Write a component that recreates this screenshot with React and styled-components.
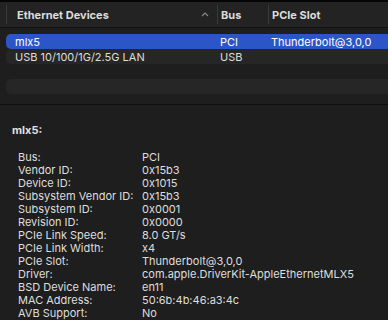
import React from 'react'
import styled, { createGlobalStyle } from 'styled-components'

const devices = [
  { name: 'mlx5', bus: 'PCI', slot: 'Thunderbolt@3,0,0' },
  { name: 'USB 10/100/1G/2.5G LAN', bus: 'USB', slot: '' },
  { name: '', bus: '', slot: '' },
  { name: '', bus: '', slot: '' },
]

const details = [
  ['Bus:', 'PCI'],
  ['Vendor ID:', '0x15b3'],
  ['Device ID:', '0x1015'],
  ['Subsystem Vendor ID:', '0x15b3'],
  ['Subsystem ID:', '0x0001'],
  ['Revision ID:', '0x0000'],
  ['PCIe Link Speed:', '8.0 GT/s'],
  ['PCIe Link Width:', 'x4'],
  ['PCIe Slot:', 'Thunderbolt@3,0,0'],
  ['Driver:', 'com.apple.DriverKit-AppleEthernetMLX5'],
  ['BSD Device Name:', 'en11'],
  ['MAC Address:', '50:6b:4b:46:a3:4c'],
  ['AVB Support:', 'No'],
]

export default function App() {
  return (
    <>
      <GlobalStyle />
      <Window>
        <TopRule />
        <Header>
          <HeadCell>
            Ethernet Devices
            <Chevron viewBox="0 0 8 5">
              <path d="M1 4 L4 1 L7 4" fill="none" stroke="#8a8a8a" strokeWidth="1.1" />
            </Chevron>
          </HeadCell>
          <HeadCell>Bus</HeadCell>
          <HeadCell>PCIe Slot</HeadCell>
        </Header>
        <Rows>
          {devices.map((d, i) => (
            <Row key={i} selected={i === 0} striped={i % 2 === 1}>
              <Cell>{d.name}</Cell>
              <Cell>{d.bus}</Cell>
              <Cell>{d.slot}</Cell>
            </Row>
          ))}
        </Rows>
        <Divider />
        <Detail>
          <Title>mlx5:</Title>
          <Props>
            {details.map(([k, v]) => (
              <React.Fragment key={k}>
                <Key>{k}</Key>
                <Val>{v}</Val>
              </React.Fragment>
            ))}
          </Props>
        </Detail>
      </Window>
    </>
  )
}

//-----------------------------------------------style-----------------------------------------------//

const GlobalStyle = createGlobalStyle`
  body {
    margin: 0;
    background: #1e1e1e;
    font-family: Inter, "Liberation Sans", sans-serif;
  }
`

const Window = styled.div`
  width: 388px;
  height: 320px;
  overflow: hidden;
  display: flex;
  flex-direction: column;
  background: #1e1e1e;
  color: #dedede;
  font-size: 11px;
`

const TopRule = styled.div`
  height: 2px;
  background: #050505;
`

const Header = styled.div`
  height: 26px;
  display: grid;
  grid-template-columns: 211px 51px 1fr;
  padding-left: 6px;
  background: #232323;
  border-bottom: 1px solid #121212;
  box-sizing: border-box;
`

const HeadCell = styled.div`
  position: relative;
  display: flex;
  align-items: center;
  padding-left: 3px;
  font-weight: 700;
  color: #dcdcdc;
  border-left: 1px solid #3a3a3a;
  margin: 3px 0 3px;
  &:first-child {
    padding-left: 10px;
  }
`

const Chevron = styled.svg`
  position: absolute;
  right: 8px;
  top: 7px;
  width: 8px;
  height: 5px;
`

const Rows = styled.div`
  padding: 6px 0 0 6px;
  height: 66px;
`

const Row = styled.div`
  height: 15px;
  display: grid;
  grid-template-columns: 211px 51px 1fr;
  align-items: center;
  border-radius: 5px 0 0 5px;
  background: ${p => (p.selected ? '#2b56c8' : p.striped ? '#262626' : 'transparent')};
  color: ${p => (p.selected ? '#ffffff' : '#dedede')};
`

const Cell = styled.div`
  padding-left: 9px;
  white-space: nowrap;
  &:not(:first-child) {
    padding-left: 3px;
  }
`

const Divider = styled.div`
  height: 1px;
  margin-top: 4px;
  background: #111111;
`

const Detail = styled.div`
  padding: 19px 0 0 12px;
`

const Title = styled.div`
  font-weight: 700;
  color: #e2e2e2;
  line-height: 13px;
`

const Props = styled.div`
  display: grid;
  grid-template-columns: 124px 1fr;
  padding: 14px 0 0 6px;
  line-height: 13px;
`

const Key = styled.div`
  white-space: nowrap;
`

const Val = styled.div`
  white-space: nowrap;
`
